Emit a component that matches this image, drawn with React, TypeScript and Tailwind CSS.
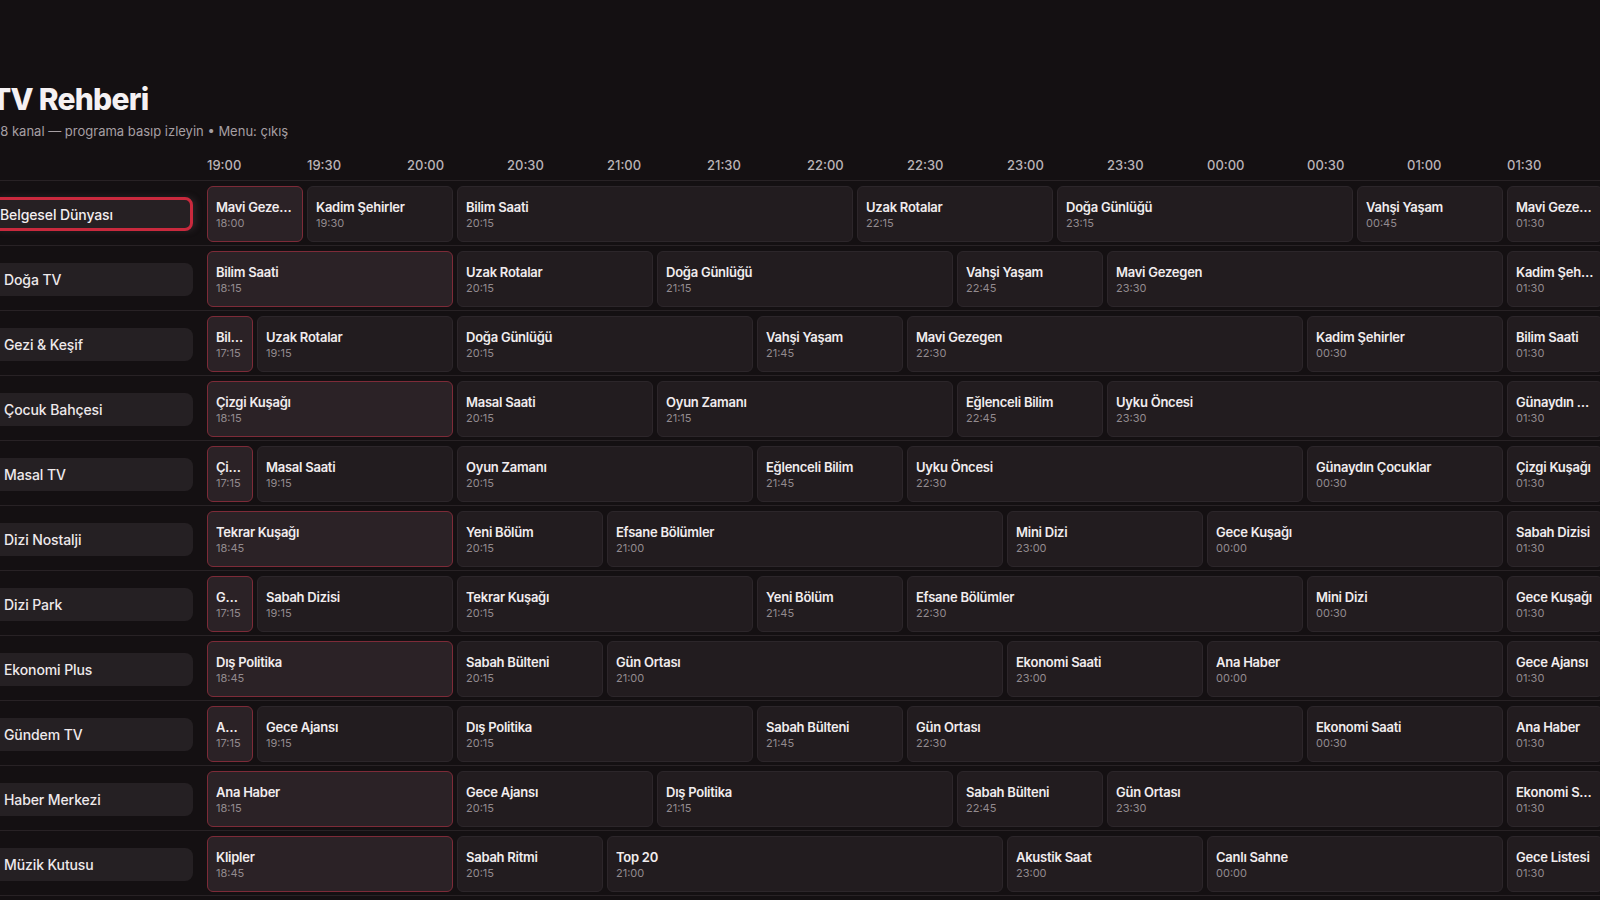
import React from "react";

type Program = [title: string, start: string];

interface Channel {
  name: string;
  programs: Program[];
}

// guide window: 19:00 → 02:00, 100px per half hour
const WINDOW_START = 19 * 60;
const WINDOW_END = 26 * 60;
const PX_PER_MIN = 100 / 30;
const GAP = 4;

const SLOTS = [
  "19:00", "19:30", "20:00", "20:30", "21:00", "21:30", "22:00",
  "22:30", "23:00", "23:30", "00:00", "00:30", "01:00", "01:30",
];

const CHANNELS: Channel[] = [
  {
    name: "Belgesel Dünyası",
    programs: [
      ["Mavi Gezegen", "18:00"], ["Kadim Şehirler", "19:30"], ["Bilim Saati", "20:15"],
      ["Uzak Rotalar", "22:15"], ["Doğa Günlüğü", "23:15"], ["Vahşi Yaşam", "00:45"],
      ["Mavi Gezegen", "01:30"],
    ],
  },
  {
    name: "Doğa TV",
    programs: [
      ["Bilim Saati", "18:15"], ["Uzak Rotalar", "20:15"], ["Doğa Günlüğü", "21:15"],
      ["Vahşi Yaşam", "22:45"], ["Mavi Gezegen", "23:30"], ["Kadim Şehirler", "01:30"],
    ],
  },
  {
    name: "Gezi & Keşif",
    programs: [
      ["Bilim Saati", "17:15"], ["Uzak Rotalar", "19:15"], ["Doğa Günlüğü", "20:15"],
      ["Vahşi Yaşam", "21:45"], ["Mavi Gezegen", "22:30"], ["Kadim Şehirler", "00:30"],
      ["Bilim Saati", "01:30"],
    ],
  },
  {
    name: "Çocuk Bahçesi",
    programs: [
      ["Çizgi Kuşağı", "18:15"], ["Masal Saati", "20:15"], ["Oyun Zamanı", "21:15"],
      ["Eğlenceli Bilim", "22:45"], ["Uyku Öncesi", "23:30"], ["Günaydın Çocuklar", "01:30"],
    ],
  },
  {
    name: "Masal TV",
    programs: [
      ["Çizgi Kuşağı", "17:15"], ["Masal Saati", "19:15"], ["Oyun Zamanı", "20:15"],
      ["Eğlenceli Bilim", "21:45"], ["Uyku Öncesi", "22:30"], ["Günaydın Çocuklar", "00:30"],
      ["Çizgi Kuşağı", "01:30"],
    ],
  },
  {
    name: "Dizi Nostalji",
    programs: [
      ["Tekrar Kuşağı", "18:45"], ["Yeni Bölüm", "20:15"], ["Efsane Bölümler", "21:00"],
      ["Mini Dizi", "23:00"], ["Gece Kuşağı", "00:00"], ["Sabah Dizisi", "01:30"],
    ],
  },
  {
    name: "Dizi Park",
    programs: [
      ["Gece Kuşağı", "17:15"], ["Sabah Dizisi", "19:15"], ["Tekrar Kuşağı", "20:15"],
      ["Yeni Bölüm", "21:45"], ["Efsane Bölümler", "22:30"], ["Mini Dizi", "00:30"],
      ["Gece Kuşağı", "01:30"],
    ],
  },
  {
    name: "Ekonomi Plus",
    programs: [
      ["Dış Politika", "18:45"], ["Sabah Bülteni", "20:15"], ["Gün Ortası", "21:00"],
      ["Ekonomi Saati", "23:00"], ["Ana Haber", "00:00"], ["Gece Ajansı", "01:30"],
    ],
  },
  {
    name: "Gündem TV",
    programs: [
      ["Ana Haber", "17:15"], ["Gece Ajansı", "19:15"], ["Dış Politika", "20:15"],
      ["Sabah Bülteni", "21:45"], ["Gün Ortası", "22:30"], ["Ekonomi Saati", "00:30"],
      ["Ana Haber", "01:30"],
    ],
  },
  {
    name: "Haber Merkezi",
    programs: [
      ["Ana Haber", "18:15"], ["Gece Ajansı", "20:15"], ["Dış Politika", "21:15"],
      ["Sabah Bülteni", "22:45"], ["Gün Ortası", "23:30"], ["Ekonomi Saati", "01:30"],
    ],
  },
  {
    name: "Müzik Kutusu",
    programs: [
      ["Klipler", "18:45"], ["Sabah Ritmi", "20:15"], ["Top 20", "21:00"],
      ["Akustik Saat", "23:00"], ["Canlı Sahne", "00:00"], ["Gece Listesi", "01:30"],
    ],
  },
];

// minutes since midnight; early-morning times roll over to the next day
function toMin(t: string) {
  const [h, m] = t.split(":").map(Number);
  const v = h * 60 + m;
  return h < 12 ? v + 24 * 60 : v;
}

function ProgramCard({ title, start, end }: { title: string; start: string; end: number }) {
  const s = toMin(start);
  const from = Math.max(s, WINDOW_START);
  const to = Math.min(end, WINDOW_END);
  const live = s <= WINDOW_START && end > WINDOW_START;
  const width = (to - from) * PX_PER_MIN - GAP;

  return (
    <div
      style={{ width }}
      className={`flex h-[56px] shrink-0 flex-col justify-center rounded-md border px-[8px] ${
        live ? "border-[#7d2b38] bg-[#2b2226]" : "border-[#2c262a] bg-[#221c1f]"
      }`}
    >
      <div className="truncate text-[13px] font-semibold leading-[16px] tracking-[-0.25px] text-[#f1ecee]">
        {title}
      </div>
      <div className="mt-px truncate text-[11px] leading-[14px] text-[#938b8f]">{start}</div>
    </div>
  );
}

function ChannelRow({ channel, focused }: { channel: Channel; focused: boolean }) {
  const items = channel.programs
    .map(([title, start], i) => {
      const next = channel.programs[i + 1];
      const end = next ? toMin(next[1]) : toMin(start) + 120;
      return { title, start, end };
    })
    .filter((p) => p.end > WINDOW_START && toMin(p.start) < WINDOW_END);

  return (
    <div className="flex h-[65px] items-center gap-[14px] border-b border-[#282225] pt-[2px]">
      <div className="w-[202px] shrink-0">
        {focused ? (
          <div className="flex h-[34px] items-center rounded-lg border-[3px] border-[#c9293d] bg-[#262023] pl-[6px] shadow-[3px_0_6px_rgba(80,70,75,0.35)]">
            <span className="text-[14px] font-medium tracking-[-0.1px] text-[#f3eef0]">{channel.name}</span>
          </div>
        ) : (
          <div className="flex h-[33px] items-center rounded-lg bg-[#252023] pl-[13px]">
            <span className="text-[14px] font-medium tracking-[-0.1px] text-[#eee9eb]">{channel.name}</span>
          </div>
        )}
      </div>
      <div className="flex gap-[4px]">
        {items.map((p, i) => (
          <ProgramCard key={i} title={p.title} start={p.start} end={p.end} />
        ))}
      </div>
    </div>
  );
}

export default function App() {
  return (
    <div className="h-[900px] w-[1600px] overflow-hidden bg-[#141012] font-['Inter','Noto_Sans',sans-serif] text-white">
      <div className="ml-[-9px] w-[1640px] pt-[79px]">
        <h1 className="text-[30px] font-extrabold leading-[40px] tracking-tight text-[#f5f1f3]">TV Rehberi</h1>
        <p className="mt-[2px] ml-[4px] text-[13px] leading-5 text-[#a69fa3]">
          18 kanal — programa basıp izleyin • Menu: çıkış
        </p>

        {/* time ruler */}
        <div className="mt-[7px] flex h-[33px] items-center gap-[14px] border-b border-[#282225] pt-[4px]">
          <div className="w-[202px] shrink-0" />
          <div className="flex">
            {SLOTS.map((t) => (
              <div key={t} className="w-[100px] shrink-0 text-[13px] font-medium text-[#bab3b7]">
                {t}
              </div>
            ))}
          </div>
        </div>

        {CHANNELS.map((c, i) => (
          <ChannelRow key={c.name} channel={c} focused={i === 0} />
        ))}
      </div>
    </div>
  );
}
